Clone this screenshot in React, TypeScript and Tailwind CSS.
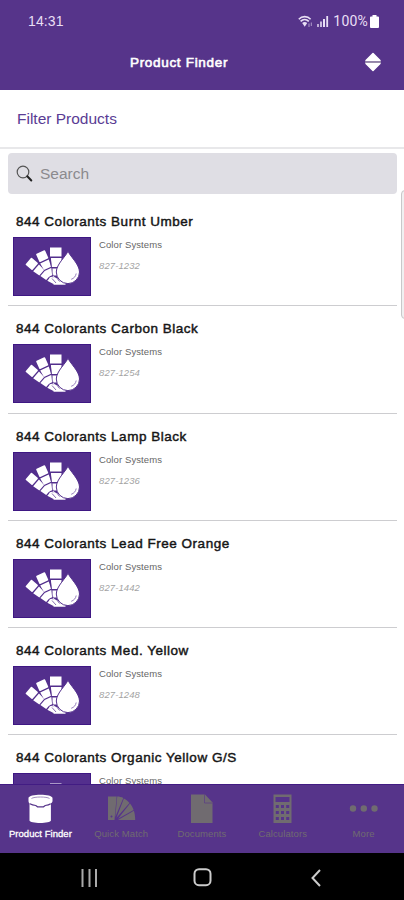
interface Product {
  name: string;
  category: string;
  code?: string;
}

const products: Product[] = [
  { name: "844 Colorants Burnt Umber", category: "Color Systems", code: "827-1232" },
  { name: "844 Colorants Carbon Black", category: "Color Systems", code: "827-1254" },
  { name: "844 Colorants Lamp Black", category: "Color Systems", code: "827-1236" },
  { name: "844 Colorants Lead Free Orange", category: "Color Systems", code: "827-1442" },
  { name: "844 Colorants Med. Yellow", category: "Color Systems", code: "827-1248" },
  { name: "844 Colorants Organic Yellow G/S", category: "Color Systems" },
];

function StatusBar() {
  return (
    <div className="flex h-[42px] items-center justify-between pl-7 pr-[25px] text-[#e9dff5]">
      <span className="text-[14px] tracking-[0.1px]">14:31</span>
      <div className="flex items-center">
        <svg width="15" height="13" viewBox="0 0 15 13" fill="none" stroke="currentColor">
          <path d="M0.8 4.2C4 .8 9.4 .8 12.6 4.2" strokeWidth="1.6" />
          <path d="M2.6 6.4C5 4 8.4 4 10.8 6.4" strokeWidth="1.6" />
          <path d="M4.2 7.9L6.7 11.8L9.2 7.9C7.7 6.800 5.700 6.800 4.200 7.900Z" fill="currentColor" stroke="none" />
          <path d="M11 8.5v3.5M13.3 7.5v3.5" strokeWidth="1" opacity=".6" />
        </svg>
        <svg className="ml-1" width="12" height="13" viewBox="0 0 12 13" fill="currentColor">
          <rect x="0" y="9" width="2" height="3" opacity=".7" />
          <rect x="3" y="6.5" width="2" height="5.5" opacity=".8" />
          <rect x="6" y="4" width="2" height="8" />
          <rect x="9.3" y="1" width="1.8" height="11" />
        </svg>
        <span className="ml-[4px] font-[Roboto,sans-serif] text-[14px] tracking-[0.2px]">100%</span>
        <svg className="ml-[2px]" width="9" height="13" viewBox="0 0 9 13" fill="#fff">
          <path d="M2.5 0h4v1.5H8a1 1 0 0 1 1 1V12a1 1 0 0 1-1 1H1a1 1 0 0 1-1-1V2.500a1 1 0 0 1 1-1h1.500z" />
        </svg>
      </div>
    </div>
  );
}

function SwatchIcon() {
  return (
    <svg width="76" height="57" viewBox="0 0 76 57" fill="#fff">
      <g transform="translate(40.500 45.500)">
        <g transform="rotate(-49)">
          <rect x="-4.800" y="-34.500" width="9.300" height="9" rx=".8" />
          <path d="M-4.700-24.200h8.900l-.8 7.500h-7.300zM-3.700-15.500h7l-.8 7h-5.400z" />
          <path d="M-2.600-7.300h5L1-.5h-2z" />
        </g>
        <g transform="rotate(-24)">
          <rect x="-5" y="-34.500" width="9.800" height="9" rx=".8" />
          <path d="M-4.900-24.200h9.400l-.8 7.500h-7.800zM-3.900-15.500h7.700l-.8 7h-6z" />
          <path d="M-2.800-7.300h5.500L1-.5h-2z" />
        </g>
        <path d="M-4.500-36h11.500v9H-4.500zM-3.600-25.500H7v9H-2.800zM-2.200-15H7v7H-1.200zM-.5-6.500l3 1.300h5l3.500 4.700v1.800H-1z" />
        <path d="M-4.500-26l3 20M-2.500-5l4 4.500M2-6l3 4" fill="none" stroke="#532f8d" strokeWidth=".7" />
      </g>
      <path
        d="M54 13C52.800 17.500 42.300 26 42.300 34a11.600 11.600 0 0 0 23.200 0C65.500 26 55.200 17.500 54 13Z"
        stroke="#532f8d"
        strokeWidth="1"
      />
      <path d="M62.200 35.500c-.5 3-2.300 4.900-5 5.800" fill="none" stroke="#8a70b3" strokeWidth=".9" />
    </svg>
  );
}

function ProductRow({ product }: { product: Product }) {
  return (
    <div className="ml-2 mr-[7px] h-[107.25px] shrink-0 border-b border-[#cdcdd0]">
      <h2 className="pl-[8px] pt-[14px] text-[13.5px] leading-[18px] tracking-[0.52px] text-[#161616] [-webkit-text-stroke:0.45px_#161616]">
        {product.name}
      </h2>
      <div className="mt-[6px] flex pl-[5px]">
        <div className="h-[59px] w-[78px] shrink-0 border border-[#3e1783] bg-[#532f8d]">
          <SwatchIcon />
        </div>
        <div className="ml-[8px] pt-[2px] text-[9.500px] leading-[12px]">
          <p className="tracking-[0.1px] text-[#666]">{product.category}</p>
          <p className="mt-[9px] italic tracking-[0.1px] text-[#a3a3a3]">{product.code}</p>
        </div>
      </div>
    </div>
  );
}

const tabs = [
  {
    label: "Product Finder",
    icon: (
      <>
        <path d="M2.500 4C2.500-.5 26.500-.5 26.500 4v3c0 1.200-.9 1.900-1.600 2.200V26.500c0 3.300-21.400 3.300-21.400 0V9.200C3 8.900 2.500 8.200 2.500 7z" />
        <path d="M5.500 4.500C8 2.500 21 2.500 23.500 4.500" fill="none" stroke="#8a72ad" strokeWidth=".8" />
        <path d="M3.800 9.700c2 1.100 4.200 1.600 6 1.800l1.700 1.300h6l1.700-1.300c1.800-.2 4-.7 5.500-1.800" fill="none" stroke="#56348a" strokeWidth="1.200" />
      </>
    ),
  },
  {
    label: "Quick Match",
    icon: (
      <>
        <path d="M1 2.500h8.700L7.500 26H1zM10.200 2.500c2 0 4.300.5 6.100 1.500L8.300 23zM16.900 4.400c2.300 1.100 4.200 2.700 5.600 4.600L9.500 23.700zM23 9.600c1.500 1.800 2.800 4 3.600 6.400L11 24.700zM26.900 16.700c.9 2.700 1.300 6 1.300 9.300H11z" />
        <circle cx="4.500" cy="22.500" r="1" fill="#56348a" />
      </>
    ),
  },
  {
    label: "Documents",
    icon: (
      <>
        <path d="M4 .5h14l7.500 8V29H4z" />
        <path d="M17.500.5v8.500h8" fill="none" stroke="#56348a" strokeWidth="1" opacity=".6" />
      </>
    ),
  },
  {
    label: "Calculators",
    icon: (
      <>
        <path d="M5.500.5h18V29h-18z" />
        <path
          d="M7.500 3h14v5h-14zM7.800 11h3v3h-3zM13 11h3v3h-3zM18.200 11h3v3h-3zM7.800 17h3v3h-3zM13 17h3v3h-3zM18.200 17h3v3h-3zM7.800 23h3v3h-3zM13 23h3v3h-3zM18.200 23h3v3h-3z"
          fill="#56348a"
        />
      </>
    ),
  },
  {
    label: "More",
    icon: (
      <>
        <circle cx="4" cy="14.500" r="3.200" />
        <circle cx="14.800" cy="14.500" r="3.200" />
        <circle cx="25.500" cy="14.500" r="3.200" />
      </>
    ),
  },
];

function TabBar() {
  return (
    <nav className="grid h-[69px] shrink-0 grid-cols-5 border-t border-[#421c83] bg-[#56348a]">
      {tabs.map((tab, i) => (
        <div
          key={tab.label}
          className={`flex flex-col items-center pt-[9px] ${i === 0 ? "text-white" : "text-[#706b70]"}`}
        >
          <svg width="29" height="30" viewBox="0 0 29 30" fill="currentColor">
            {tab.icon}
          </svg>
          <span
            className={`mt-[4px] whitespace-nowrap text-[9.500px] leading-[12px] ${
              i === 0 ? "tracking-[0.05px] [-webkit-text-stroke:0.3px_white]" : "tracking-[0.1px]"
            }`}
          >
            {tab.label}
          </span>
        </div>
      ))}
    </nav>
  );
}

function SystemNav() {
  return (
    <div className="flex h-[47px] shrink-0 items-center bg-black pl-[81px] pt-[2px]">
      <svg width="16" height="18" viewBox="0 0 16 18" stroke="#aaa" strokeWidth="2">
        <path d="M1.500 0v18M8.500 0v18M15 0v18" />
      </svg>
      <svg className="ml-[96px]" width="19" height="19" viewBox="0 0 19 19" fill="none" stroke="#ccc" strokeWidth="2">
        <rect x="1.500" y="1.200" width="16" height="16" rx="4.500" />
      </svg>
      <svg className="ml-[99px]" width="10" height="18" viewBox="0 0 10 18" fill="none" stroke="#ccc" strokeWidth="2">
        <path d="M9 1L1.500 9L9 17" />
      </svg>
    </div>
  );
}

export default function App() {
  return (
    <div className="relative flex h-[900px] w-[404px] flex-col overflow-hidden bg-white font-['Liberation_Sans',Arial,sans-serif]">
      <header className="h-[90px] shrink-0 bg-[#56348a]">
        <StatusBar />
        <div className="flex h-10 items-center justify-between pl-[130px] pr-[22px]">
          <h1 className="pt-[2px] text-[13.5px] tracking-[0.68px] text-white [-webkit-text-stroke:0.6px_white]">
            Product Finder
          </h1>
          <svg width="18" height="20" viewBox="0 0 18 20" fill="#fff" stroke="#fff" strokeLinejoin="round">
            <path d="M9 1.500L16 8.500H2zM2 11.500h14L9 18.500z" strokeWidth="1.500" />
            <path d="M1 9.300h16v1.600H1z" fill="#9c92ac" stroke="none" />
          </svg>
        </div>
      </header>

      {/* Filter link */}
      <div className="flex h-[59px] shrink-0 items-center border-b-2 border-[#e8e8ea] pl-[17px] text-[15.500px] text-[#5a3c94]">
        Filter Products
      </div>

      <div className="ml-2 mr-[7px] mt-[4px] flex h-[41px] shrink-0 items-center rounded-[4px] bg-[#dfdee4] pl-[8px]">
        <svg width="17" height="18" viewBox="0 0 17 18" fill="none" strokeLinecap="round">
          <circle cx="7" cy="7" r="5.800" stroke="#555" strokeWidth="1.200" />
          <path d="M11.300 11.300l4 4.200" stroke="#222" strokeWidth="2" />
        </svg>
        <span className="ml-[7px] text-[15.500px] text-[#8b8a8e]">Search</span>
      </div>

      <main className="mt-[5px] flex min-h-0 flex-1 flex-col overflow-hidden">
        {products.map((product) => (
          <ProductRow key={product.name} product={product} />
        ))}
      </main>

      {/* Edge panel handle */}
      <div className="absolute right-[-6px] top-[190px] h-[129px] w-[9px] rounded-[4px] border border-[#c8c8ca] bg-[#f0f0f1]" />

      <TabBar />
      <SystemNav />
    </div>
  );
}
